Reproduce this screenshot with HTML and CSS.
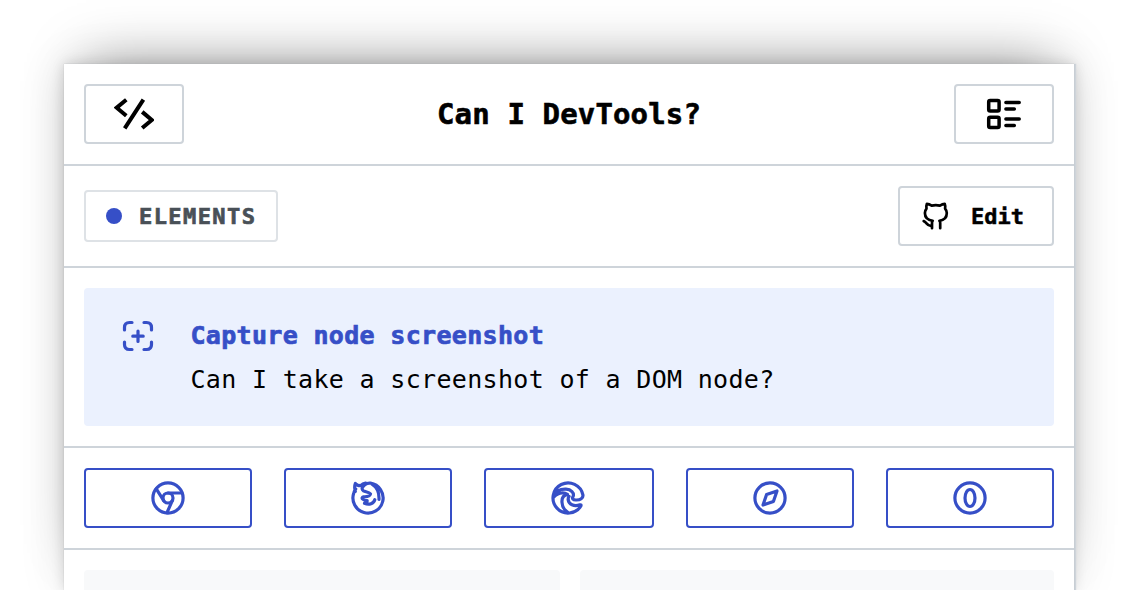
FILE: index.html
```html
<!DOCTYPE html>
<html lang="en">
<head>
<meta charset="utf-8">
<title>Can I DevTools?</title>
<link rel="stylesheet" href="styles.css">
</head>
<body>
<main class="card">
  <header class="row">
    <a class="button square"><svg class="code" viewBox="0 0 40 32"><path d="M12.3 1.8 2.7 9.7l9.6 8.1M29.4 1.6 10.7 30.4M28.2 13.9l9.6 8.1-9.6 8"/></svg></a>
    <h1 class="title">Can I DevTools?</h1>
    <a class="button square"><svg class="icon list" viewBox="0 0 36 36"><rect x="2.7" y="4.6" width="10.4" height="10.3" rx="1.5"/><rect x="2.7" y="21.2" width="10.4" height="10.3" rx="1.5"/><path d="M19.9 6.4h13.3M19.9 13h8.4M19.9 23h13.3M19.9 29.6h8.4"/></svg></a>
  </header>
  <section class="row">
    <span class="tag"><i class="dot"></i><span class="tag-name">ELEMENTS</span></span>
    <a class="button edit"><svg class="github" viewBox="0 0 28 28"><path d="M10 26.2v-5.4q0-1.3.7-2C5.7 18.1 2.9 15.5 2.9 11q0-2.4 1.6-4.4-.5-2.5.4-4.8 2.2.1 4.8 1.8 4.1-.9 8.2 0 2.6-1.7 4.8-1.8.9 2.3.4 4.8 1.7 2 1.7 4.4c0 4.5-2.4 7.1-7.4 7.8q.8.7.8 2v5.4M10 23.7c-5.1 1.2-5.1-3.7-8.3-4.6"/></svg><span>Edit</span></a>
  </section>
  <section class="row">
    <div class="feature">
      <svg class="icon blue" viewBox="0 0 36 36"><path d="M4.5 12V9.5q0-5 5-5H12M24 4.5h2.5q5 0 5 5V12M31.5 24v2.5q0 5-5 5H24M12 31.5H9.5q-5 0-5-5V24M18 13v10.4M12.8 18.2h10.4"/></svg>
      <div>
        <h2 class="name">Capture node screenshot</h2>
        <p class="question">Can I take a screenshot of a DOM node?</p>
      </div>
    </div>
  </section>
  <nav class="row browsers">
    <a class="button browser"><svg class="icon blue" viewBox="0 0 36 36"><circle cx="18" cy="18" r="15.1"/><circle cx="18" cy="18" r="5"/><path d="M18 13h13.8M13.7 20.6 6.3 8.9M22.3 20.6 17 32.7"/></svg></a>
    <a class="button browser"><svg class="icon blue" viewBox="0 0 36 36"><path d="M5.3 11.5Q4 7 5.4 3.4q1.8 2.3 5.2 2.3 2.2-2.2 5-2.7-.7 1-.8 1.8Q17.5 2.7 20.5 3.1A15.1 15.1 0 1 1 3.7 13.2q.5-2.4 2-4.2M14.8 4.8Q10.2 8.6 13.5 10.9c2 1 5.5 1 7 3-.9 3.2-4.6 2.7-7 2.9-3 .9-.8 3.7 3.7 3.9-.1 1.7-1.5 2.3-2.7 2.6 4.7 2.1 9.2.2 10.3-3.6M22 4.2q7.5 4.6 7 15.3"/></svg></a>
    <a class="button browser"><svg class="icon blue" viewBox="0 0 36 36"><path d="M23.2 16.2c-1.7 2.3-.1 3.7 2.6 3.8 4.5.2 7.6-1.8 7.1-5.1A15.1 15.1 0 1 0 30.9 26q.6-1.6-1-1.1c-6.2 1.8-11-.5-11.7-4.8-.2-1.5.1-2.8.9-3.7M23.2 16.2c1.1-3.1-2-6.9-7.2-7-5.5-.2-10.3 2.2-12.1 6.5M3.7 17C7.5 13.2 13 11.6 17.4 14.4c-3.9.8-5.7 3.9-5.4 7.9.3 4.6 3.1 8.4 6.4 10.5"/></svg></a>
    <a class="button browser"><svg class="icon blue" viewBox="0 0 36 36"><circle cx="18" cy="18" r="15.1"/><path d="m25 11-3.6 10.4L11 25l3.6-10.4Z"/></svg></a>
    <a class="button browser"><svg class="icon blue" viewBox="0 0 36 36"><circle cx="18" cy="18" r="15.1"/><ellipse cx="18" cy="18" rx="5" ry="8.5"/></svg></a>
  </nav>
  <section class="panels"><div class="panel"></div><div class="panel"></div></section>
</main>
</body>
</html>
```
FILE: styles.css
```css
* { box-sizing: border-box; }

body {
  margin: 0;
  height: 590px;
  padding: 64px 0 0 64px;
  overflow: hidden;
  background: #fff;
  color: #000;
  font-family: "DejaVu Sans Mono", monospace;
}

h1, h2, p { margin: 0; }

.card {
  width: 1010px;
  height: 526px;
  background: #fff;
  box-shadow:
    0 0 1px rgba(0, 0, 0, .16),
    2px 0 1px #ced4da,
    0 0 12px rgba(0, 0, 0, .14),
    0 0 44px rgba(0, 0, 0, .1),
    0 -24px 54px -22px rgba(0, 0, 0, .34);
}

.row {
  display: flex;
  align-items: center;
  justify-content: space-between;
  padding: 20px;
  border-bottom: 2px solid #ced4da;
}

.row:nth-child(-n+2) { height: 102px; }

.button {
  display: flex;
  align-items: center;
  justify-content: center;
  height: 60px;
  border: 2px solid #ced4da;
  border-radius: 4px;
}

.square { width: 100px; }

.title {
  font-size: 29px;
  line-height: 40px;
  letter-spacing: .14px;
  -webkit-text-stroke: .6px;
}

svg {
  display: block;
  flex: none;
  fill: none;
  stroke: currentColor;
  stroke-width: 3.2;
  stroke-linecap: round;
  stroke-linejoin: round;
}

.icon { width: 36px; height: 36px; }
.blue { color: #364fc7; }
.list { stroke-width: 3.5; }

.code {
  width: 40px;
  height: 32px;
  stroke-width: 4;
  stroke-linecap: butt;
  stroke-linejoin: miter;
}

.tag {
  display: flex;
  align-items: center;
  gap: 17px;
  width: 194px;
  height: 52px;
  padding-left: 20px;
  border: 2px solid #dee2e6;
  border-radius: 4px;
  color: #495057;
  font-size: 22px;
  font-weight: 700;
}

.tag-name {
  letter-spacing: 1.42px;
  -webkit-text-stroke: .7px;
}

.dot {
  width: 16px;
  height: 16px;
  border-radius: 50%;
  background: #364fc7;
}

.edit {
  justify-content: flex-start;
  gap: 21px;
  width: 156px;
  padding-left: 22px;
  font-size: 22px;
  font-weight: 700;
  -webkit-text-stroke: .5px;
}

.github { width: 28px; height: 28px; stroke-width: 2.7; }

.feature {
  display: flex;
  gap: 34.5px;
  width: 970px;
  height: 138px;
  padding: 30px 36px;
  border-radius: 4px;
  background: #ebf1fe;
}

.name, .question {
  font-size: 25px;
  letter-spacing: .32px;
}

.name {
  padding-top: 1px;
  line-height: 34px;
  color: #364fc7;
  -webkit-text-stroke: .7px;
}

.question { margin-top: 5px; line-height: 44px; }

.browsers {
  display: grid;
  grid-template-columns: 168px 168px 170px 168px 168px;
  gap: 32px;
}

.browser { border-color: #364fc7; }

.browser:nth-child(3) { padding-right: 2px; }

.panels {
  display: grid;
  grid-template-columns: 476px 474px;
  gap: 20px;
  padding: 20px 20px 0;
}

.panel {
  height: 20px;
  border-radius: 4px 4px 0 0;
  background: #f8f9fa;
}
```
